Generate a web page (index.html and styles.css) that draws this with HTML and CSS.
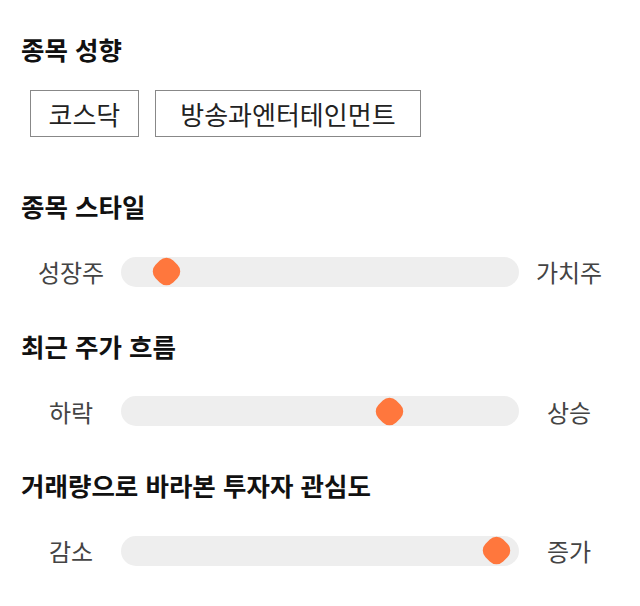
FILE: index.html
```html
<!DOCTYPE html>
<html lang="ko">
<head>
    <meta charset="UTF-8">
    <meta name="viewport" content="width=device-width, initial-scale=1.0">
    <title>종목 분석</title>
    <link rel="stylesheet" href="styles.css">
</head>
<body>
    <div id='container'>
        <div class='section'>
            <h2 class='title'>종목 성향</h2>
            <div class='tags'>
                <span class='tag'>코스닥</span>
                <span class='tag wide'>방송과엔터테인먼트</span>
            </div>
        </div>

        <div class='section'>
            <h2 class='title'>종목 스타일</h2>
            <div class='slider'>
                <span class='label'>성장주</span>
                <div class='track'><span class='thumb' style="left: 8.3%"></span></div>
                <span class='label'>가치주</span>
            </div>
        </div>

        <div class='section'>
            <h2 class='title'>최근 주가 흐름</h2>
            <div class='slider'>
                <span class='label'>하락</span>
                <div class='track'><span class='thumb' style="left: 64.4%"></span></div>
                <span class='label'>상승</span>
            </div>
        </div>

        <div class='section'>
            <h2 class='title'>거래량으로 바라본 투자자 관심도</h2>
            <div class='slider'>
                <span class='label'>감소</span>
                <div class='track'><span class='thumb' style="left: 91.3%"></span></div>
                <span class='label'>증가</span>
            </div>
        </div>
    </div>
</body>
</html>
```

FILE: styles.css
```css
*{
    margin: 0;
    padding: 0;
    box-sizing: border-box;
}
body{
    font-family: "Noto Sans CJK KR", "Noto Sans", sans-serif;
    color: #222;
    background: #fff;
}
#container{
    display: flex;
    flex-direction: column;
    padding: 32px 20px 0 21px;
}
.section{
    display: flex;
    flex-direction: column;
}
.section + .section{
    margin-top: 39.5px;
}
.section:nth-child(2){
    margin-top: 52px;
}
.title{
    font-size: 25.5px;
    font-weight: 700;
    line-height: 34px;
    color: #111;
}
.tags{
    display: flex;
    gap: 16px;
    margin: 24px 0 0 9px;
}
.tag{
    display: inline-block;
    height: 47px;
    line-height: 45px;
    padding: 0 17.5px;
    font-size: 26px;
    border: 1px solid #888;
    color: #222;
}
.tag.wide{
    padding: 0 24.5px;
}
.slider{
    display: flex;
    align-items: center;
    margin-top: 31px;
}
.label{
    width: 100px;
    flex: none;
    text-align: center;
    font-size: 24px;
    color: #444;
}
.track{
    position: relative;
    width: 398px;
    height: 30px;
    border-radius: 15px;
    background: #eeeeee;
}
.thumb{
    position: absolute;
    top: 2.5px;
    width: 25px;
    height: 25px;
    background: #ff773d;
    border-radius: 38%;
    transform: rotate(45deg);
}
```
